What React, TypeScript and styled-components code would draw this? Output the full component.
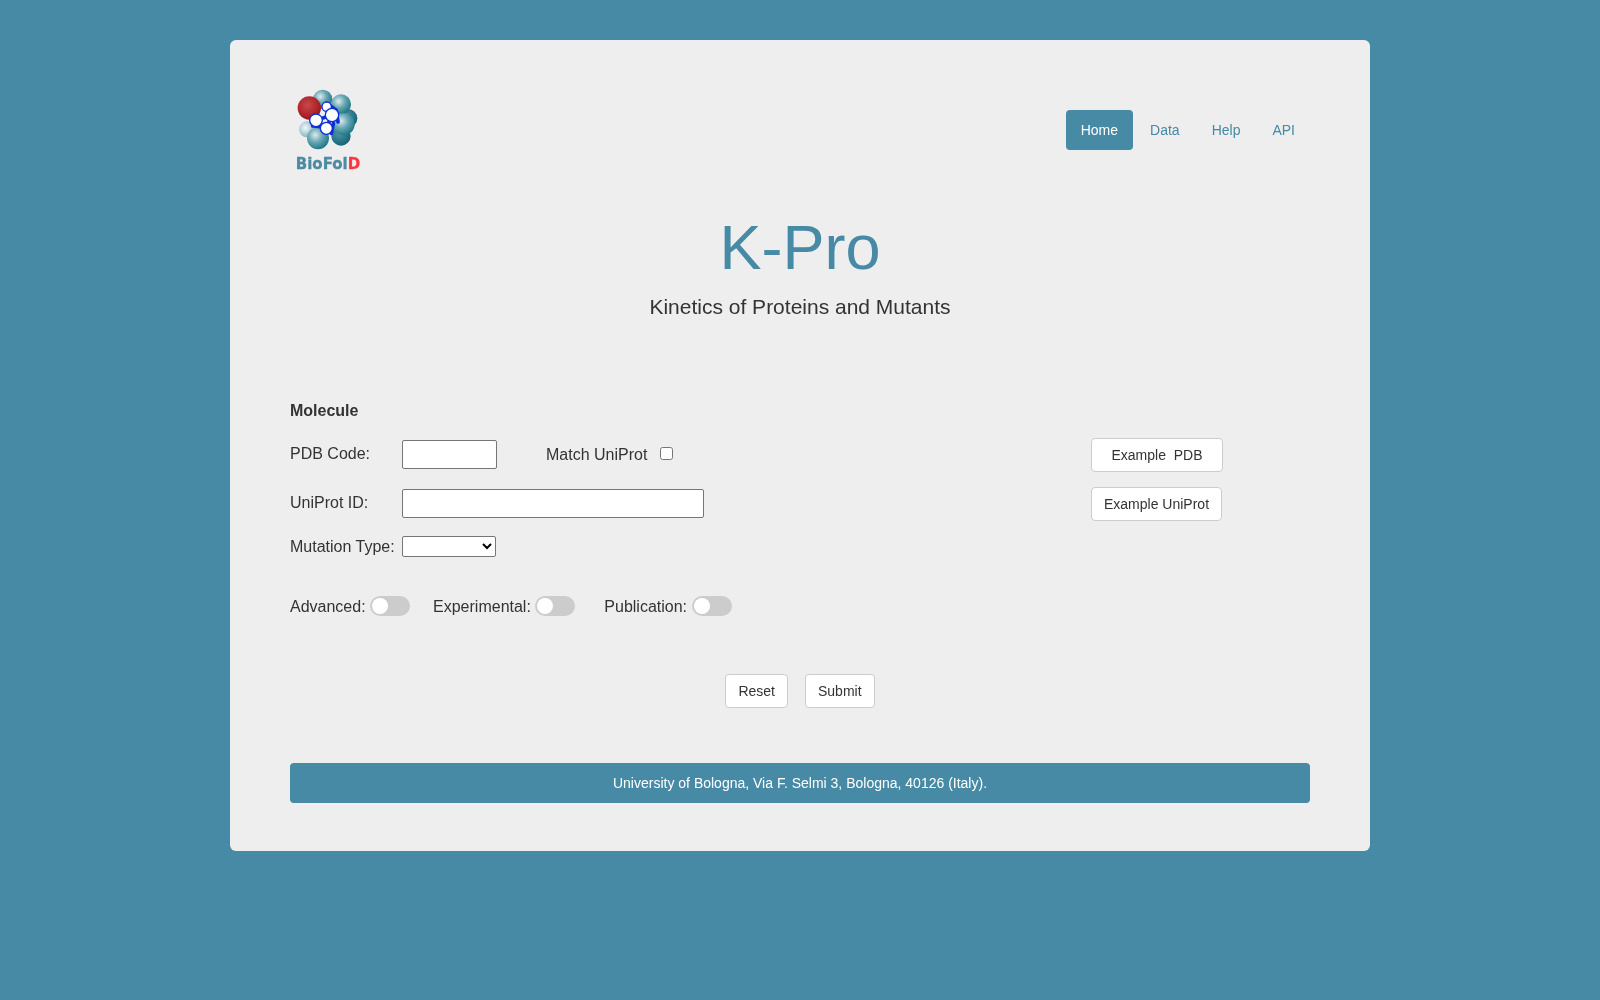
import styled, { createGlobalStyle } from 'styled-components';

const teal = '#468aa5';

const GlobalStyle = createGlobalStyle`
  html, body {
    margin: 0;
    padding: 0;
    background: ${teal};
    font-family: "Liberation Sans", Arial, sans-serif;
    color: #333;
  }
  * { box-sizing: border-box; }
`;

const Page = styled.div`
  min-height: 1000px;
  padding-top: 40px;
  will-change: transform;
`;

const Card = styled.main`
  width: 1140px;
  height: 811px;
  margin: 0 auto;
  padding: 48px 60px 0;
  background: #eee;
  border-radius: 6px;
`;

const Header = styled.header`
  display: flex;
  justify-content: space-between;
  align-items: flex-start;
`;

const Logo = styled.div`
  display: flex;
  flex-direction: column;
  align-items: center;
  width: 76px;
`;

const LogoText = styled.span`
  margin-top: 4px;
  font-family: "DejaVu Sans", sans-serif;
  font-size: 15px;
  font-weight: 700;
  line-height: 17px;
  color: #4c8ba3;
  -webkit-text-stroke: 0.3px;
  b { color: #ff3340; font-weight: 700; }
`;

const Nav = styled.nav`
  display: flex;
  gap: 2px;
  margin-top: 22px;
`;

const NavLink = styled.a<{ $active?: boolean }>`
  padding: 10px 15px;
  font-size: 14px;
  line-height: 20px;
  border-radius: 4px;
  color: ${({ $active }) => ($active ? '#fff' : teal)};
  background: ${({ $active }) => ($active ? teal : 'transparent')};
`;

const Hero = styled.div`
  text-align: center;
  margin-top: 40px;
`;

const Title = styled.h1`
  margin: 0;
  font-size: 63px;
  font-weight: 400;
  line-height: 69px;
  color: ${teal};
`;

const Subtitle = styled.h2`
  margin: 13px 0 0;
  font-size: 21px;
  font-weight: 400;
  line-height: 23px;
  color: #333;
`;

const Form = styled.form`
  margin-top: 83px;
`;

const SectionTitle = styled.div`
  font-size: 16px;
  font-weight: 700;
  line-height: 20px;
`;

const FieldRow = styled.div<{ $top: number; $height: number }>`
  display: flex;
  align-items: center;
  height: ${({ $height }) => $height}px;
  margin-top: ${({ $top }) => $top}px;
`;

const Label = styled.label`
  width: 112px;
  font-size: 16px;
  line-height: 20px;
  color: #333;
`;

const InputLabel = styled(Label)`
  margin-bottom: 2px;
`;

const TextInput = styled.input<{ $width: number }>`
  width: ${({ $width }) => $width}px;
  height: 29px;
  margin-bottom: 1px;
  padding: 1px 2px;
  border: 1px solid #767676;
  border-radius: 2px;
  background: #fff;
`;

const MatchLabel = styled.span`
  margin: 0 13px 1px 49px;
  font-size: 16px;
  line-height: 20px;
`;

const Check = styled.input`
  width: 13px;
  height: 13px;
  margin: 0 0 3px;
`;

const MutationSelect = styled.select`
  width: 94px;
  height: 21px;
  border: 1px solid #767676;
  border-radius: 2px;
  background: #fff;
  font-family: "Liberation Sans", Arial, sans-serif;
  font-size: 13px;
`;

const ExampleSlot = styled.div`
  width: 219px;
  margin-left: auto;
`;

const Button = styled.button<{ $pad?: number }>`
  height: 34px;
  padding: 0 ${({ $pad }) => $pad ?? 12}px;
  font-family: "Liberation Sans", Arial, sans-serif;
  font-size: 14px;
  line-height: 20px;
  color: #333;
  background: #fff;
  border: 1px solid #ccc;
  border-radius: 4px;
`;

const ToggleRow = styled.div`
  display: flex;
  align-items: center;
  height: 20px;
  margin-top: 39px;
`;

const ToggleItem = styled.label<{ $after?: number; $inner?: number }>`
  display: flex;
  align-items: center;
  gap: ${({ $inner }) => $inner ?? 4.45}px;
  margin-right: ${({ $after }) => $after ?? 0}px;
  font-size: 16px;
  line-height: 20px;
`;

const ToggleText = styled.span`
  margin-top: 1px;
`;

const Slider = styled.span`
  position: relative;
  width: 40px;
  height: 20px;
  border-radius: 10px;
  background: #ccc;

  &::before {
    content: '';
    position: absolute;
    left: 2px;
    top: 2px;
    width: 16px;
    height: 16px;
    border-radius: 50%;
    background: #fff;
  }
`;

const Actions = styled.div`
  display: flex;
  justify-content: center;
  gap: 17px;
  margin-top: 58px;
`;

const Footer = styled.footer`
  margin-top: 55px;
  padding: 10px 15px;
  font-size: 14px;
  line-height: 20px;
  text-align: center;
  color: #fff;
  background: ${teal};
  border-radius: 4px;
`;

// lavender atoms that peek out between the teal ones
const patches = [
  { cx: 116, cy: 36, r: 11 },
  { cx: 160, cy: 72, r: 14 },
  { cx: 34, cy: 106, r: 10 },
  { cx: 120, cy: 160, r: 14 },
];

const balls = [
  { cx: 92, cy: 40, r: 29, fill: 'url(#tealBall)' },
  { cx: 168, cy: 97, r: 28, fill: 'url(#darkBall)' },
  { cx: 147, cy: 55, r: 30, fill: 'url(#tealBall)' },
  { cx: 45, cy: 130, r: 24, fill: 'url(#paleBall)' },
  { cx: 147, cy: 150, r: 29, fill: 'url(#darkBall)' },
  { cx: 155, cy: 115, r: 33, fill: 'url(#tealBall)' },
  { cx: 78, cy: 157, r: 33, fill: 'url(#tealBall)' },
  { cx: 52, cy: 66, r: 35, fill: 'url(#redBall)' },
];

const whites = [
  { cx: 104, cy: 62, r: 14 },
  { cx: 72, cy: 103, r: 19 },
  { cx: 120, cy: 87, r: 20 },
  { cx: 103, cy: 127, r: 18 },
];

function BioFoldLogo() {
  return (
    <svg width="72" height="64" viewBox="0 6 216 192">
      <defs>
        <radialGradient id="tealBall" cx="0.38" cy="0.35" r="0.72">
          <stop offset="0" stopColor="#dcebee" />
          <stop offset="0.45" stopColor="#6ba7b4" />
          <stop offset="1" stopColor="#13707f" />
        </radialGradient>
        <radialGradient id="darkBall" cx="0.4" cy="0.35" r="0.7">
          <stop offset="0" stopColor="#4f97a6" />
          <stop offset="1" stopColor="#0f6172" />
        </radialGradient>
        <radialGradient id="paleBall" cx="0.4" cy="0.4" r="0.7">
          <stop offset="0" stopColor="#f2f8f9" />
          <stop offset="1" stopColor="#74a9b7" />
        </radialGradient>
        <radialGradient id="redBall" cx="0.42" cy="0.38" r="0.7">
          <stop offset="0" stopColor="#c9484b" />
          <stop offset="0.6" stopColor="#b02629" />
          <stop offset="1" stopColor="#86171b" />
        </radialGradient>
        <radialGradient id="whiteBall" cx="0.45" cy="0.4" r="0.7">
          <stop offset="0.75" stopColor="#fff" />
          <stop offset="1" stopColor="#e6e2f8" />
        </radialGradient>
      </defs>
      {patches.map((p) => (
        <circle key={`${p.cx}-${p.cy}`} {...p} fill="#f1ecfb" />
      ))}
      {balls.map((b) => (
        <circle key={`${b.cx}-${b.cy}`} {...b} />
      ))}
      <path
        d="M104 52 L132 72 L138 108 M120 87 L72 103 L103 127 L120 87 M62 120 L88 122 M118 142 L124 112"
        fill="none"
        stroke="#0b2fd8"
        strokeWidth="11"
        strokeLinecap="round"
      />
      {whites.map((w) => (
        <circle
          key={`${w.cx}-${w.cy}`}
          {...w}
          fill="url(#whiteBall)"
          stroke="#0b2fd8"
          strokeWidth="4"
        />
      ))}
    </svg>
  );
}

export default function App() {
  return (
    <>
      <GlobalStyle />
      <Page>
        <Card>
          <Header>
            <Logo>
              <BioFoldLogo />
              <LogoText>
                BioFol<b>D</b>
              </LogoText>
            </Logo>
            <Nav>
              <NavLink $active>Home</NavLink>
              <NavLink>Data</NavLink>
              <NavLink>Help</NavLink>
              <NavLink>API</NavLink>
            </Nav>
          </Header>

          <Hero>
            <Title>K-Pro</Title>
            <Subtitle>Kinetics of Proteins and Mutants</Subtitle>
          </Hero>

          <Form>
            <SectionTitle>Molecule</SectionTitle>
            <FieldRow $top={17} $height={34}>
              <InputLabel>PDB Code:</InputLabel>
              <TextInput $width={95} />
              <MatchLabel>Match UniProt</MatchLabel>
              <Check type="checkbox" />
              <ExampleSlot>
                <Button type="button" $pad={19.5}>
                  Example&nbsp;&nbsp;PDB
                </Button>
              </ExampleSlot>
            </FieldRow>
            <FieldRow $top={15} $height={34}>
              <InputLabel>UniProt ID:</InputLabel>
              <TextInput $width={302} />
              <ExampleSlot>
                <Button type="button">Example UniProt</Button>
              </ExampleSlot>
            </FieldRow>
            <FieldRow $top={15} $height={21}>
              <Label>Mutation Type:</Label>
              <MutationSelect>
                <option />
              </MutationSelect>
            </FieldRow>
            <ToggleRow>
              <ToggleItem $after={23}>
                <ToggleText>Advanced:</ToggleText>
                <Slider />
              </ToggleItem>
              <ToggleItem $after={29}>
                <ToggleText>Experimental:</ToggleText>
                <Slider />
              </ToggleItem>
              <ToggleItem $inner={4.5}>
                <ToggleText>Publication:</ToggleText>
                <Slider />
              </ToggleItem>
            </ToggleRow>
            <Actions>
              <Button type="button">Reset</Button>
              <Button type="button">Submit</Button>
            </Actions>
          </Form>

          <Footer>University of Bologna, Via F. Selmi 3, Bologna, 40126 (Italy).</Footer>
        </Card>
      </Page>
    </>
  );
}
